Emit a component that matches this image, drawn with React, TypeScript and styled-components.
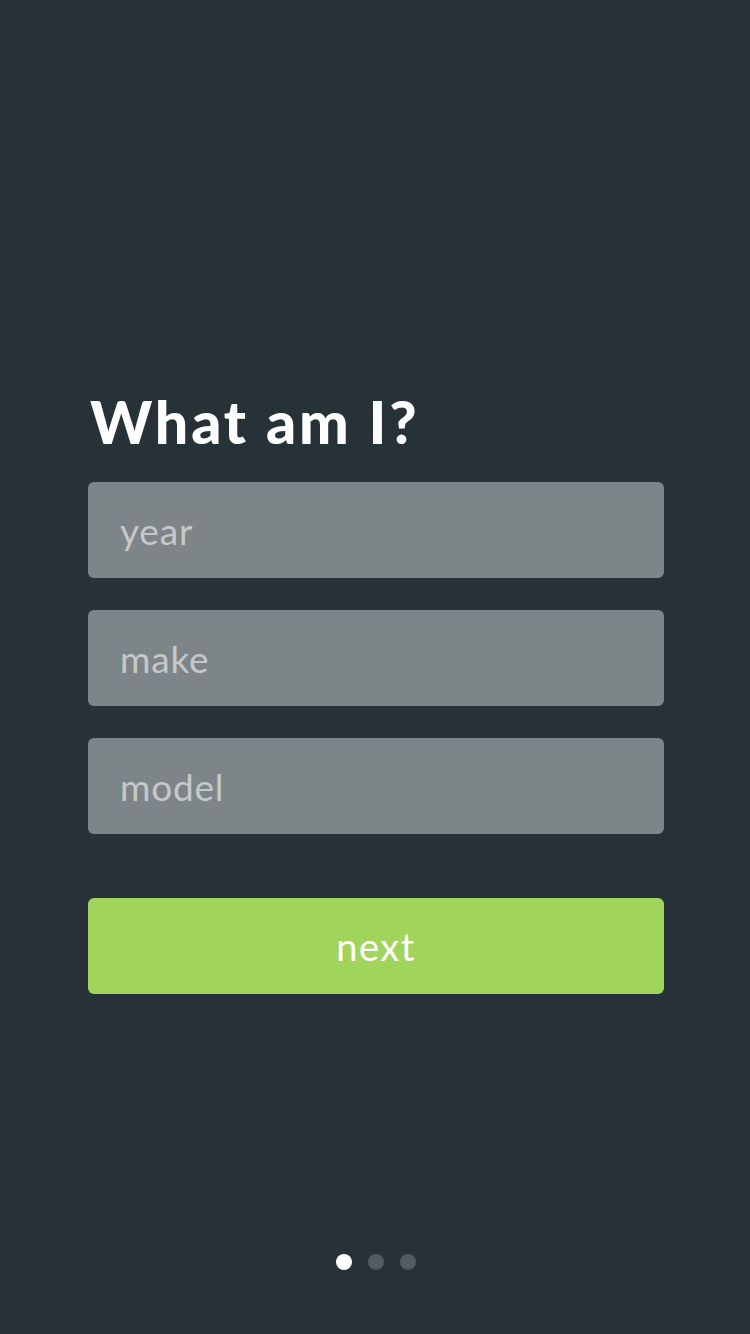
import React from "react";
import styled, { createGlobalStyle } from "styled-components";

const Global = createGlobalStyle`
  html, body { margin: 0; padding: 0; background: #263238; }
  * { box-sizing: border-box; }
  body { font-family: Nunito, Lato, "Noto Sans", sans-serif; }
`;

const Screen = styled.div`
  width: 750px;
  height: 1334px;
  background: #263238;
  display: flex;
  flex-direction: column;
  padding: 384px 86px 64px 88px;
`;

const Title = styled.h1`
  margin: 0 0 22px 2px;
  font-family: Lato, "Noto Sans", sans-serif;
  font-weight: 900;
  font-size: 59px;
  line-height: 76px;
  color: #ffffff;
  letter-spacing: 2.9px;
`;

const Form = styled.div`
  display: flex;
  flex-direction: column;
  gap: 32px;
`;

const Field = styled.input`
  height: 96px;
  width: 576px;
  border: none;
  outline: none;
  border-radius: 6px;
  background: #7e8588;
  padding: 0 32px;
  font-family: Lato, "Noto Sans", sans-serif;
  font-size: 37px;
  letter-spacing: 0.8px;
  color: #ffffff;
  &::placeholder { color: #c5c9cb; }
`;

const Button = styled.button`
  margin-top: 64px;
  height: 96px;
  width: 576px;
  border: none;
  border-radius: 6px;
  background: #a1d45a;
  color: #ffffff;
  font-family: Lato, "Noto Sans", sans-serif;
  font-size: 38px;
  letter-spacing: 1.5px;
  cursor: pointer;
`;

const Dots = styled.div`
  margin-top: auto;
  display: flex;
  justify-content: center;
  gap: 16px;
`;

const Dot = styled.span<{ $active?: boolean }>`
  width: 16px;
  height: 16px;
  border-radius: 50%;
  background: ${(p) => (p.$active ? "#ffffff" : "#525c61")};
`;

export default function App() {
  return (
    <>
      <Global />
      <Screen>
        <Title>What am I?</Title>
        <Form>
          <Field placeholder="year" />
          <Field placeholder="make" />
          <Field placeholder="model" />
        </Form>
        <Button>next</Button>
        <Dots>
          <Dot $active />
          <Dot />
          <Dot />
        </Dots>
      </Screen>
    </>
  );
}
